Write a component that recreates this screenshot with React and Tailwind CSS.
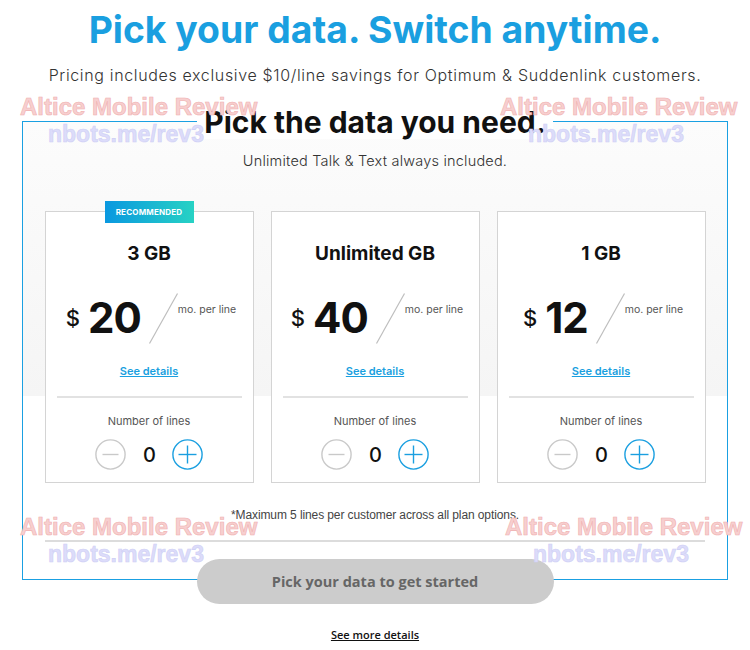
import { useState } from 'react'

const plans = [
  { id: 'p3', name: '3 GB', price: 20, recommended: true },
  { id: 'unl', name: 'Unlimited GB', price: 40 },
  { id: 'p1', name: '1 GB', price: 12 },
]

function MinusIcon() {
  return (
    <svg width="31" height="31" viewBox="0 0 31 31" fill="none">
      <circle cx="15.5" cy="15.5" r="14.6" stroke="#c9c9c9" strokeWidth="1.4" />
      <line x1="7.5" y1="15.5" x2="23.5" y2="15.5" stroke="#c9c9c9" strokeWidth="1.4" />
    </svg>
  )
}

function PlusIcon() {
  return (
    <svg width="31" height="31" viewBox="0 0 31 31" fill="none">
      <circle cx="15.5" cy="15.5" r="14.6" stroke="#1a9fe0" strokeWidth="1.4" />
      <line x1="6.5" y1="15.5" x2="24.5" y2="15.5" stroke="#1a9fe0" strokeWidth="1.4" />
      <line x1="15.5" y1="6.5" x2="15.5" y2="24.5" stroke="#1a9fe0" strokeWidth="1.4" />
    </svg>
  )
}

function PlanCard({ plan, lines, onChange }) {
  return (
    <div className="relative flex h-[272px] w-[209px] flex-col items-center border border-[#d4d4d4] bg-white">
      {plan.recommended && (
        <div className="absolute left-[59px] top-[-11px] flex h-[22px] w-[89px] items-center justify-center bg-[linear-gradient(to_right,#0a98e0,#27d2c4)] text-[8px] font-bold uppercase tracking-[0.2px] text-white">
          Recommended
        </div>
      )}

      <h3 className="mt-[30px] text-[19px] font-bold leading-[24px] text-[#111]">{plan.name}</h3>

      <div className="ml-[4px] mt-[27px] flex items-start">
        <span className="mt-[14px] text-[22px] font-medium leading-none text-[#111]">$</span>
        <span className="ml-[8px] mt-[4px] text-[42px] font-bold leading-none tracking-[-1px] text-[#111]">
          {plan.price}
        </span>
        <svg className="ml-[8px]" width="29" height="51" viewBox="0 0 29 51">
          <line x1="28.5" y1="0.5" x2="0.5" y2="50.5" stroke="#bdbdbd" strokeWidth="1.2" />
        </svg>
        <span className="mt-[12px] text-[10.5px] leading-none text-[#555]">mo. per line</span>
      </div>

      <a href="#" className="mt-[20px] text-[11px] font-semibold leading-[14px] text-[#1a9fe0] underline">
        See details
      </a>

      <div className="mt-[18px] h-[2px] w-[185px] bg-[#e2e2e2]" />

      <p className="mt-[16px] text-[11px] leading-[14px] text-[#555]">Number of lines</p>

      <div className="mt-[11px] flex items-center gap-[17px]">
        <button onClick={() => onChange(Math.max(0, lines - 1))}>
          <MinusIcon />
        </button>
        <span className="w-[12px] text-center text-[20px] font-medium leading-none text-[#111]">{lines}</span>
        <button onClick={() => onChange(Math.min(5, lines + 1))}>
          <PlusIcon />
        </button>
      </div>
    </div>
  )
}

function Watermark({ className }) {
  return (
    <div className={`pointer-events-none absolute font-['Liberation_Sans',Arial,sans-serif] font-bold ${className}`}>
      <div className="text-[24px] leading-[28px] text-[#f7cfcf] [-webkit-text-stroke:0.6px_#f0b0b0]">Altice Mobile Review</div>
      <div className="ml-[28px] text-[23px] leading-[27px] text-[#dcdcfa] [-webkit-text-stroke:0.6px_#cfcff5]">nbots.me/rev3</div>
    </div>
  )
}

export default function App() {
  const [lines, setLines] = useState({ p3: 0, unl: 0, p1: 0 })

  return (
    <div className="relative h-[650px] w-[750px] overflow-hidden bg-white font-['Inter','Noto_Sans',sans-serif] text-black">
      <h1 className="pt-[8px] text-center text-[37.3px] font-bold leading-[44px] text-[#1a9fe0]">
        Pick your data. Switch anytime.
      </h1>
      <p className="mt-[13px] text-center text-[16px] font-light leading-[20px] tracking-[0.65px] text-[#333]">
        Pricing includes exclusive $10/line savings for Optimum &amp; Suddenlink customers.
      </p>

      <div className="mx-[22px] mt-[36px] flex flex-col items-center border border-[#1aa0e2] bg-[linear-gradient(to_bottom,#fcfcfc_0px,#f5f5f5_274px,#ffffff_274px)]">
        <h2 className="-mt-[17px] bg-white px-[7px] text-[30px] font-bold leading-[34px] text-[#111]">
          Pick the data you need.
        </h2>
        <p className="mt-[13px] text-[14.5px] font-light leading-[18px] tracking-[0.2px] text-[#333]">
          Unlimited Talk &amp; Text always included.
        </p>

        <div className="mt-[41px] flex gap-[17px]">
          {plans.map((plan) => (
            <PlanCard
              key={plan.id}
              plan={plan}
              lines={lines[plan.id]}
              onChange={(n) => setLines({ ...lines, [plan.id]: n })}
            />
          ))}
        </div>

        <p className="mt-[25px] font-['Liberation_Sans',Arial,sans-serif] text-[12px] leading-[14px] tracking-[-0.1px] text-[#444]">
          *Maximum 5 lines per customer across all plan options.
        </p>

        <div className="mt-[18px] h-[2px] w-[660px] bg-[#dcdcdc]" />

        <button className="relative mt-[17px] -mb-[25px] h-[45px] w-[357px] rounded-full bg-[#cccccc] font-['Open_Sans',sans-serif] text-[14.5px] font-bold text-[#666]">
          Pick your data to get started
        </button>
      </div>

      <div className="mt-[41px] text-center">
        <a href="#" className="font-['Open_Sans',sans-serif] text-[11px] font-semibold leading-[14px] text-[#111] underline">
          See more details
        </a>
      </div>

      <Watermark className="left-[20px] top-[93px]" />
      <Watermark className="left-[500px] top-[93px]" />
      <Watermark className="left-[20px] top-[513px]" />
      <Watermark className="left-[505px] top-[513px]" />
    </div>
  )
}
